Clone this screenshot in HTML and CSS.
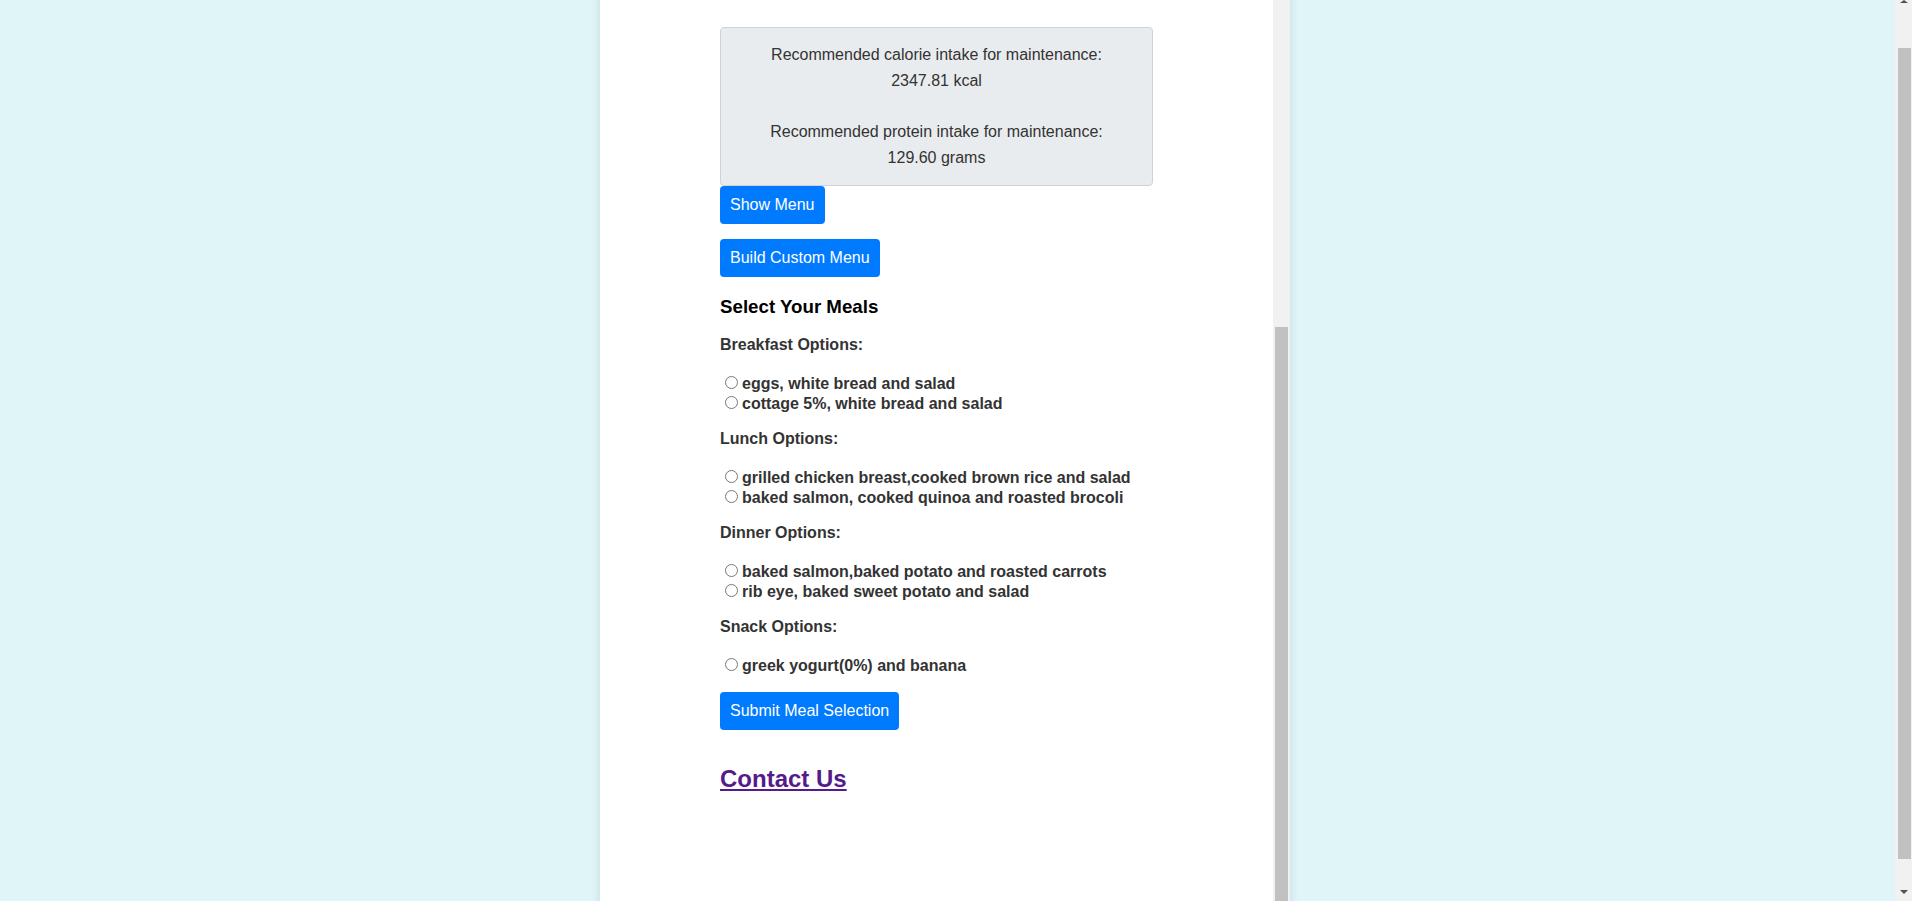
FILE: index.html
```html
<!DOCTYPE html>
<html lang="en">
<head>
<meta charset="utf-8">
<title>Meal Planner</title>
<link rel="stylesheet" href="styles.css">
</head>
<body>
<div class="viewport">
  <main class="panel">
    <div class="panel-content">
      <div class="result">
        <p>Recommended calorie intake for maintenance:<br>2347.81 kcal</p>
        <p>Recommended protein intake for maintenance:<br>129.60 grams</p>
      </div>

      <div class="actions">
        <button type="button" class="btn">Show Menu</button>
        <button type="button" class="btn">Build Custom Menu</button>
      </div>

      <form class="meal-form">
        <h3 class="meal-title">Select Your Meals</h3>

        <div class="group">
          <p class="group-title">Breakfast Options:</p>
          <label class="option"><input type="radio" name="breakfast">eggs, white bread and salad</label>
          <label class="option"><input type="radio" name="breakfast">cottage 5%, white bread and salad</label>
        </div>

        <div class="group">
          <p class="group-title">Lunch Options:</p>
          <label class="option"><input type="radio" name="lunch">grilled chicken breast,cooked brown rice and salad</label>
          <label class="option"><input type="radio" name="lunch">baked salmon, cooked quinoa and roasted brocoli</label>
        </div>

        <div class="group">
          <p class="group-title">Dinner Options:</p>
          <label class="option"><input type="radio" name="dinner">baked salmon,baked potato and roasted carrots</label>
          <label class="option"><input type="radio" name="dinner">rib eye, baked sweet potato and salad</label>
        </div>

        <div class="group">
          <p class="group-title">Snack Options:</p>
          <label class="option"><input type="radio" name="snack">greek yogurt(0%) and banana</label>
        </div>

        <button type="button" class="btn">Submit Meal Selection</button>
      </form>

      <h2 class="contact"><a href="#contact" class="contact-link">Contact Us</a></h2>
    </div>
    <div class="panel-scrollbar"><div class="thumb"></div></div>
  </main>
</div>
<div class="window-scrollbar">
  <div class="arrow arrow-up"><span class="tri-up"></span></div>
  <div class="track"><div class="thumb"></div></div>
  <div class="arrow arrow-down"><span class="tri-down"></span></div>
</div>
</body>
</html>
```

FILE: styles.css
```css
html, body {
  margin: 0;
}

body {
  height: 100vh;
  overflow: hidden;
  display: flex;
  background: #dff5f8;
  font-family: "Liberation Sans", Arial, sans-serif;
  font-size: 16px;
  color: #333;
}

.viewport {
  flex: 1;
  display: flex;
  justify-content: center;
  align-items: flex-start;
  padding-right: 5px;
  overflow: hidden;
}

.panel {
  width: 690px;
  height: 963px;
  margin-top: -34px;
  flex-shrink: 0;
  display: flex;
  background: #fff;
  box-shadow: 0 0 10px rgba(0, 0, 0, 0.1);
}

.panel-content {
  flex: 1;
  padding: 61px 120px 0;
}

.panel-scrollbar {
  width: 17px;
  box-sizing: border-box;
  padding: 361px 2px 17px;
  background: #f1f1f1;
  display: flex;
  flex-direction: column;
}

.thumb {
  flex: 1;
  background: #c1c1c1;
}

.result {
  background: #e9ecef;
  border: 1px solid #cfd3d7;
  border-radius: 4px;
  padding: 14px;
  text-align: center;
  line-height: 26px;
  color: #333;
}

.result p {
  margin: 0;
}

.result p + p {
  margin-top: 25px;
}

.actions {
  display: flex;
  flex-direction: column;
  align-items: flex-start;
  gap: 15px;
}

.btn {
  font-family: "Liberation Sans", Arial, sans-serif;
  font-size: 16px;
  line-height: 18px;
  padding: 10px;
  border: 0;
  border-radius: 4px;
  background: #007bff;
  color: #fff;
  cursor: pointer;
}

.meal-title {
  font-size: 18.72px;
  font-weight: bold;
  color: #000;
  margin: 18.72px 0;
}

.group {
  margin-bottom: 17.5px;
}

.group-title {
  font-weight: bold;
  margin: 0 0 18.4px;
  color: #333;
}

.option {
  display: block;
  font-weight: bold;
  color: #333;
}

.option input {
  margin: 3px 4px 0 5px;
}

.contact {
  font-size: 24px;
  font-weight: bold;
  margin: 35px 0 0;
}

.contact-link {
  color: #551a8b;
}

.window-scrollbar {
  width: 17px;
  flex-shrink: 0;
  background: #f1f1f1;
  display: flex;
  flex-direction: column;
}

.window-scrollbar .arrow {
  height: 17px;
  box-sizing: border-box;
  display: flex;
  justify-content: center;
  align-items: flex-start;
  padding-left: 1px;
}

.window-scrollbar .arrow-down {
  padding-top: 6px;
}

.tri-up {
  width: 0;
  height: 0;
  border-left: 4px solid transparent;
  border-right: 4px solid transparent;
  border-bottom: 3px solid #505050;
}

.tri-down {
  width: 0;
  height: 0;
  border-left: 4px solid transparent;
  border-right: 4px solid transparent;
  border-top: 4px solid #505050;
}

.window-scrollbar .track {
  flex: 1;
  display: flex;
  flex-direction: column;
  padding: 31px 1px 25px 3px;
}
```
